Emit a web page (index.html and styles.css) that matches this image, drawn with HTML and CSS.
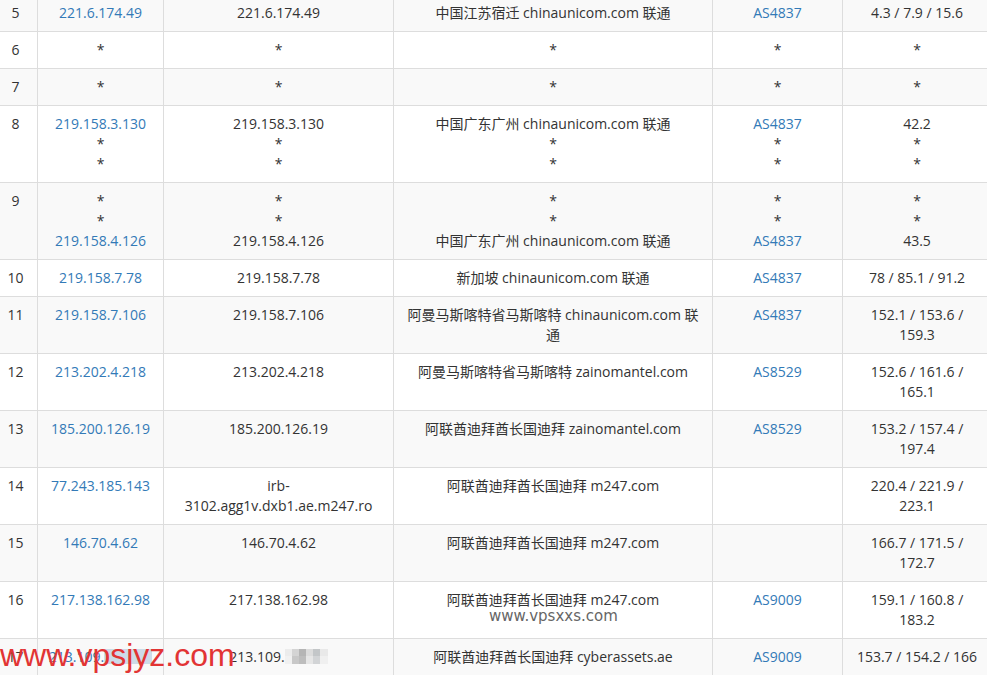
FILE: index.html
```html
<!DOCTYPE html>
<html lang="zh-CN">
<head>
  <meta charset="UTF-8">
  <title>Traceroute</title>
  <link rel="stylesheet" href="styles.css">
</head>
<body>
  <table class="trace">
    <colgroup>
      <col class="c-hop">
      <col class="c-ip">
      <col class="c-host">
      <col class="c-loc">
      <col class="c-as">
      <col class="c-ms">
    </colgroup>
    <tbody>
      <tr>
        <td>5</td>
        <td><a href="#">221.6.174.49</a></td>
        <td>221.6.174.49</td>
        <td>中国江苏宿迁 chinaunicom.com 联通</td>
        <td><a href="#">AS4837</a></td>
        <td>4.3 / 7.9 / 15.6</td>
      </tr>
      <tr>
        <td>6</td>
        <td>*</td>
        <td>*</td>
        <td>*</td>
        <td>*</td>
        <td>*</td>
      </tr>
      <tr>
        <td>7</td>
        <td>*</td>
        <td>*</td>
        <td>*</td>
        <td>*</td>
        <td>*</td>
      </tr>
      <tr>
        <td>8</td>
        <td><a href="#">219.158.3.130</a><br>*<br>*</td>
        <td>219.158.3.130<br>*<br>*</td>
        <td>中国广东广州 chinaunicom.com 联通<br>*<br>*</td>
        <td><a href="#">AS4837</a><br>*<br>*</td>
        <td>42.2<br>*<br>*</td>
      </tr>
      <tr>
        <td>9</td>
        <td>*<br>*<br><a href="#">219.158.4.126</a></td>
        <td>*<br>*<br>219.158.4.126</td>
        <td>*<br>*<br>中国广东广州 chinaunicom.com 联通</td>
        <td>*<br>*<br><a href="#">AS4837</a></td>
        <td>*<br>*<br>43.5</td>
      </tr>
      <tr>
        <td>10</td>
        <td><a href="#">219.158.7.78</a></td>
        <td>219.158.7.78</td>
        <td>新加坡 chinaunicom.com 联通</td>
        <td><a href="#">AS4837</a></td>
        <td>78 / 85.1 / 91.2</td>
      </tr>
      <tr>
        <td>11</td>
        <td><a href="#">219.158.7.106</a></td>
        <td>219.158.7.106</td>
        <td>阿曼马斯喀特省马斯喀特 chinaunicom.com 联<br>通</td>
        <td><a href="#">AS4837</a></td>
        <td>152.1 / 153.6 /<br>159.3</td>
      </tr>
      <tr>
        <td>12</td>
        <td><a href="#">213.202.4.218</a></td>
        <td>213.202.4.218</td>
        <td>阿曼马斯喀特省马斯喀特 zainomantel.com</td>
        <td><a href="#">AS8529</a></td>
        <td>152.6 / 161.6 /<br>165.1</td>
      </tr>
      <tr>
        <td>13</td>
        <td><a href="#">185.200.126.19</a></td>
        <td>185.200.126.19</td>
        <td>阿联酋迪拜酋长国迪拜 zainomantel.com</td>
        <td><a href="#">AS8529</a></td>
        <td>153.2 / 157.4 /<br>197.4</td>
      </tr>
      <tr>
        <td>14</td>
        <td><a href="#">77.243.185.143</a></td>
        <td>irb-<br>3102.agg1v.dxb1.ae.m247.ro</td>
        <td>阿联酋迪拜酋长国迪拜 m247.com</td>
        <td></td>
        <td>220.4 / 221.9 /<br>223.1</td>
      </tr>
      <tr>
        <td>15</td>
        <td><a href="#">146.70.4.62</a></td>
        <td>146.70.4.62</td>
        <td>阿联酋迪拜酋长国迪拜 m247.com</td>
        <td></td>
        <td>166.7 / 171.5 /<br>172.7</td>
      </tr>
      <tr>
        <td>16</td>
        <td><a href="#">217.138.162.98</a></td>
        <td>217.138.162.98</td>
        <td>阿联酋迪拜酋长国迪拜 m247.com</td>
        <td><a href="#">AS9009</a></td>
        <td>159.1 / 160.8 /<br>183.2</td>
      </tr>
      <tr>
        <td>17</td>
        <td><a href="#">213.109.</a><span class="mosaic mosaic-blue"></span></td>
        <td>213.109.<span class="mosaic"></span></td>
        <td>阿联酋迪拜酋长国迪拜 cyberassets.ae</td>
        <td><a href="#">AS9009</a></td>
        <td>153.7 / 154.2 / 166</td>
      </tr>
    </tbody>
  </table>

  <div class="mark mark-gray">www.vpsxxs.com</div>
  <div class="mark mark-red">www.vpsjyz.com</div>
</body>
</html>
```

FILE: styles.css
```css
* {
  margin: 0;
  padding: 0;
  box-sizing: border-box;
}

body {
  font-family: "Open Sans", "Noto Sans CJK SC", sans-serif;
  font-size: 14px;
  line-height: 20px;
  color: #333;
  background: #fff;
  overflow: hidden;
}

a {
  color: #337ab7;
  text-decoration: none;
}

.trace {
  width: 998px;
  margin: -6px 0 0 -7px;
  border-collapse: collapse;
  table-layout: fixed;
}

.c-hop { width: 44px; }
.c-ip { width: 126px; }
.c-host { width: 230px; }
.c-loc { width: 319px; }
.c-as { width: 130px; }
.c-ms { width: 149px; }

.trace td {
  padding: 8px;
  border: 1px solid #ddd;
  text-align: center;
  vertical-align: top;
}

.trace tr:nth-child(odd) td {
  background-color: #f9f9f9;
}

.mosaic {
  display: inline-block;
  width: 43px;
  height: 15px;
  vertical-align: -2px;
  background:
    linear-gradient(90deg, #ececec 0 7px, #d4d4d4 7px 14px, #b5b5b5 14px 21px, #dcdcdc 21px 28px, #c3c6c8 28px 35px, #e9e9e9 35px 43px) top / 100% 7px no-repeat,
    linear-gradient(90deg, #f1f1f1 0 7px, #c8c8c8 7px 14px, #bdbdbd 14px 21px, #e6e6e6 21px 28px, #d2d4d6 28px 35px, #f0f0f0 35px 43px) bottom / 100% 8px no-repeat;
}

.mosaic-blue {
  width: 48px;
  background: #cddbe8;
}

.mark {
  position: absolute;
  white-space: nowrap;
}

.mark-gray {
  left: 489px;
  top: 609px;
  font-family: "DejaVu Sans", sans-serif;
  font-size: 15px;
  line-height: 15px;
  color: #666;
}

.mark-red {
  left: 0;
  top: 639px;
  font-family: "Liberation Sans", Arial, sans-serif;
  font-size: 32px;
  line-height: 32px;
  color: #e23434;
}
```
